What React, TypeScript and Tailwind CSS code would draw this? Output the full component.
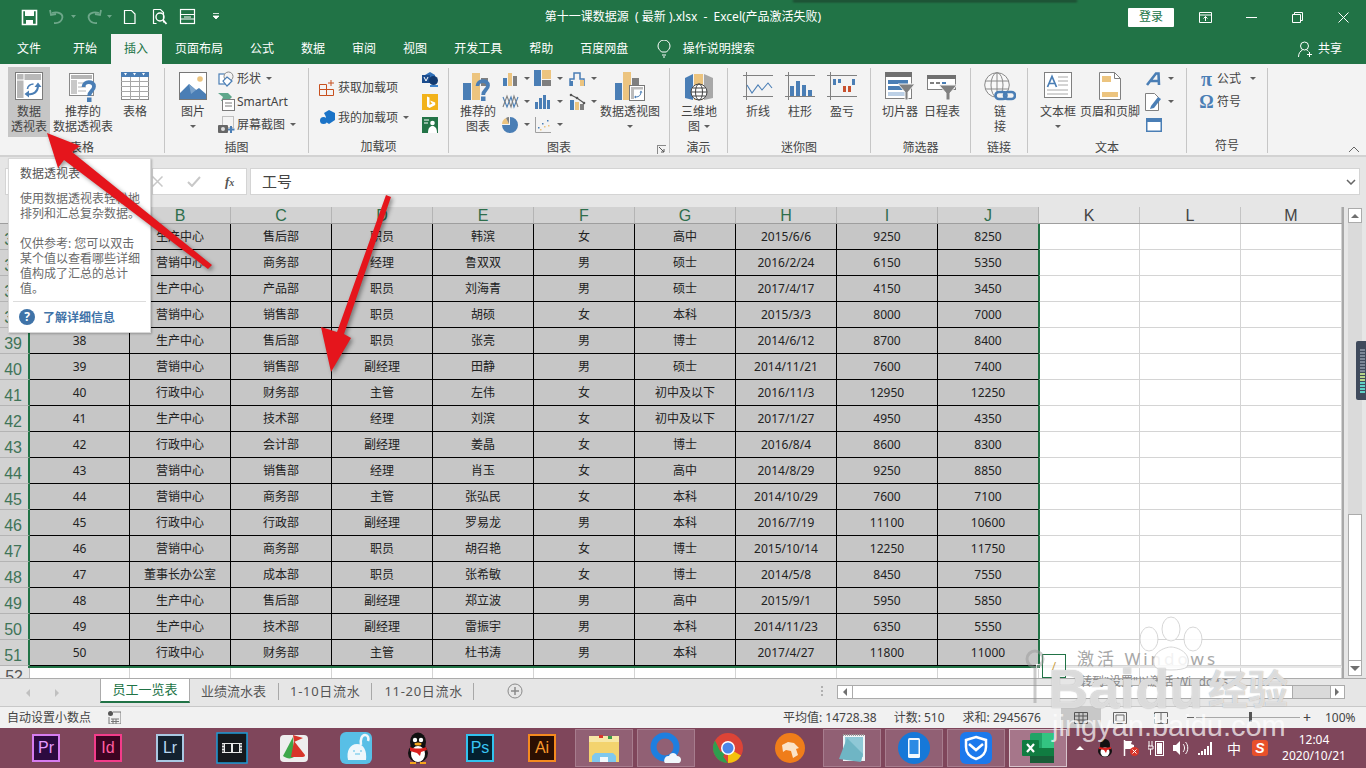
import type { ReactNode } from "react";

const BLUE = "#4a7eb5";
const TAN = "#ecc47f";
const GRAY = "#7f7f7f";

const RIBBON_TABS = ["文件", "开始", "插入", "页面布局", "公式", "数据", "审阅", "视图", "开发工具", "帮助", "百度网盘"];

const COLS = ["A", "B", "C", "D", "E", "F", "G", "H", "I", "J"];
const EXTRA_COLS = ["K", "L", "M"];

const ROWS: string[][] = [
  ["34", "生产中心", "售后部", "职员", "韩滨", "女", "高中", "2015/6/6", "9250", "8250"],
  ["35", "营销中心", "商务部", "经理", "鲁双双", "男", "硕士", "2016/2/24", "6150", "5350"],
  ["36", "生产中心", "产品部", "职员", "刘海青", "男", "硕士", "2017/4/17", "4150", "3450"],
  ["37", "营销中心", "销售部", "职员", "胡硕", "女", "本科", "2015/3/3", "8000", "7000"],
  ["38", "生产中心", "售后部", "职员", "张亮", "男", "博士", "2014/6/12", "8700", "8400"],
  ["39", "营销中心", "销售部", "副经理", "田静", "男", "硕士", "2014/11/21", "7600", "7400"],
  ["40", "行政中心", "财务部", "主管", "左伟", "女", "初中及以下", "2016/11/3", "12950", "12250"],
  ["41", "生产中心", "技术部", "经理", "刘滨", "女", "初中及以下", "2017/1/27", "4950", "4350"],
  ["42", "行政中心", "会计部", "副经理", "姜晶", "女", "博士", "2016/8/4", "8600", "8300"],
  ["43", "营销中心", "销售部", "经理", "肖玉", "女", "高中", "2014/8/29", "9250", "8850"],
  ["44", "营销中心", "商务部", "主管", "张弘民", "女", "本科", "2014/10/29", "7600", "7100"],
  ["45", "行政中心", "行政部", "副经理", "罗易龙", "男", "本科", "2016/7/19", "11100", "10600"],
  ["46", "营销中心", "商务部", "职员", "胡召艳", "女", "博士", "2015/10/14", "12250", "11750"],
  ["47", "董事长办公室", "成本部", "职员", "张希敏", "女", "博士", "2014/5/8", "8450", "7550"],
  ["48", "生产中心", "售后部", "副经理", "郑立波", "男", "高中", "2015/9/1", "5950", "5850"],
  ["49", "生产中心", "技术部", "副经理", "雷振宇", "男", "本科", "2014/11/23", "6350", "5550"],
  ["50", "行政中心", "财务部", "主管", "杜书涛", "男", "本科", "2017/4/27", "11800", "11000"],
];

function Svg({ w, h, children }: { w: number; h: number; children: ReactNode }) {
  return (
    <svg width={w} height={h} viewBox={`0 0 ${w} ${h}`} fill="none" className="shrink-0 block">
      {children}
    </svg>
  );
}

function Caret() {
  return <span className="inline-block h-0 w-0 shrink-0 border-x-[3px] border-t-[3px] border-x-transparent border-t-[#5f5f5f]" />;
}

/* ---------- ribbon icons ---------- */

const PivotIcon = () => (
  <Svg w={28} h={28}>
    <rect x="0.5" y="0.5" width="27" height="27" fill="#fff" stroke="#7b7b7b" />
    <rect x="2" y="2" width="7" height="24" fill="#b8b8b8" />
    <rect x="2" y="2" width="24" height="6" fill="#b8b8b8" />
    <path d="M9 2v24M2 8h7" stroke="#fff" />
    <path d="M13 22c5 1 10-2 10-8" stroke={BLUE} strokeWidth="2" />
    <path d="M19.500 15l3.500-4.500 3.500 4.500zM14 18.500L9.500 22l4.500 3.500z" fill={BLUE} />
    <path d="M12.500 17c0-3 3-5 6-5" stroke={BLUE} strokeWidth="1.600" />
  </Svg>
);

const QuestionMark = ({ x, y }: { x: number; y: number }) => (
  <g transform={`translate(${x} ${y})`}>
    <path d="M1.500 6C1.500-.5 12-.5 12 5.500c0 4.500-4.800 4.500-4.800 9.500" stroke={BLUE} strokeWidth="3.800" fill="none" />
    <rect x="5" y="16.500" width="4.500" height="4.500" fill={BLUE} />
  </g>
);

const RecPivotIcon = () => (
  <Svg w={30} h={30}>
    <rect x="1.5" y="1.5" width="24" height="22" fill="#fff" stroke="#8a8a8a" />
    <rect x="3" y="3" width="21" height="4" fill="#b5b5b5" />
    <rect x="3" y="8" width="6" height="14" fill="#c9c9c9" />
    <path d="M10 11h13M10 15h8M10 19h8" stroke="#b5b5b5" />
    <QuestionMark x={14} y={9} />
  </Svg>
);

const TableIcon = () => (
  <Svg w={28} h={28}>
    <rect x="0.5" y="0.5" width="27" height="27" fill="#fff" stroke="#8a8a8a" />
    <rect x="0" y="0" width="28" height="5" fill={BLUE} />
    <path d="M3 1h3l-1.500 2.500zM12 1h3l-1.500 2.500zM21 1h3l-1.500 2.500z" fill="#fff" />
    <path d="M0 9.500h28M0 14.500h28M0 19.500h28M0 24.500h28M9.500 5v23M18.500 5v23" stroke="#a8a8a8" />
  </Svg>
);

const PictureIcon = () => (
  <Svg w={28} h={28}>
    <rect x="0.5" y="0.5" width="27" height="27" fill="#fff" stroke="#777" />
    <circle cx="21" cy="7" r="2.800" fill={TAN} />
    <path d="M1 27V21L10 12l7 6 3-2 7 6v5z" fill={BLUE} />
    <path d="M10 12l7 6-5 4z" fill="#7ba3cc" />
  </Svg>
);

const ShapesIcon = () => (
  <Svg w={16} h={16}>
    <rect x="1" y="3" width="10" height="10" stroke={BLUE} strokeWidth="1.200" fill="#fff" />
    <circle cx="10.500" cy="5.500" r="4.500" stroke="#8a8a8a" fill="#f3f3f3" />
    <path d="M9 6l5 4-5 5-4-5z" stroke={BLUE} strokeWidth="1.200" fill="#fff" />
  </Svg>
);

const SmartArtIcon = () => (
  <Svg w={17} h={18}>
    <path d="M0 0h10l4 4-4 4H3l2-4z" fill="#5ea68a" />
    <rect x="4.500" y="6.500" width="12" height="11" fill="#fff" stroke="#7b7b7b" />
    <path d="M7 10h7M7 13h7" stroke="#7b7b7b" />
  </Svg>
);

const ScreenshotIcon = () => (
  <Svg w={17} h={18}>
    <rect x="4.500" y="0.500" width="11" height="11" stroke="#8a8a8a" strokeDasharray="1 1" />
    <rect x="0" y="9" width="10" height="8" rx="1" fill="#666" />
    <circle cx="5" cy="13" r="2" fill="#ddd" />
    <path d="M13 10v7M10 13.500h6.500" stroke={BLUE} strokeWidth="2" />
  </Svg>
);

const GetAddinIcon = () => (
  <Svg w={16} h={16}>
    <path d="M0.500 4.500h7v5h-7zM7.500 9.500h7v6h-7zM0.500 9.500h7v6h-7z" stroke="#c8501e" />
    <path d="M12 0v6M9 3h6" stroke="#c8501e" />
  </Svg>
);

const MyAddinIcon = () => (
  <Svg w={15} h={15}>
    <circle cx="3.500" cy="10.500" r="3.500" fill="#1a73c7" />
    <path d="M4 3l5-3 6 3v7l-6 4-3-2V7z" fill="#1a73c7" />
  </Svg>
);

const VisioIcon = () => (
  <Svg w={16} h={16}>
    <path d="M3 4l5-3 5 3v3H3z" fill="#2f6fb7" />
    <rect x="0" y="4" width="8" height="8" fill="#1c4d8e" />
    <path d="M2 6l2 4 2-4" stroke="#fff" />
    <circle cx="11.500" cy="9.500" r="4.500" fill="#123a70" />
    <path d="M8 14h8v2H8z" fill="#3f84cc" />
  </Svg>
);

const BingIcon = () => (
  <Svg w={16} h={16}>
    <rect width="16" height="16" fill="#f2b21a" />
    <path d="M5 2.500l2.500 1v7.500l3-1.700-1.500-.7-.8-2 5 1.800v2.600L7.500 14 5 12.500z" fill="#fff" />
  </Svg>
);

const PeopleIcon = () => (
  <Svg w={16} h={16}>
    <rect width="16" height="16" fill="#237346" />
    <path d="M2 3h5M2 6h4" stroke="#fff" />
    <circle cx="10.500" cy="6" r="2.300" fill="#fff" />
    <path d="M6 16c0-5 2-7 4.500-7S15 11 15 16z" fill="#fff" />
  </Svg>
);

const RecChartIcon = () => (
  <Svg w={30} h={30}>
    <rect x="0" y="11" width="8" height="17" fill={BLUE} />
    <rect x="9" y="1" width="8" height="27" fill={TAN} />
    <rect x="18" y="6" width="7" height="8" fill={GRAY} />
    <QuestionMark x={13} y={8} />
  </Svg>
);

const ColChart = () => (
  <Svg w={16} h={16}>
    <rect x="1" y="7" width="4" height="8" fill={BLUE} />
    <rect x="6" y="2" width="4" height="13" fill={TAN} />
    <rect x="11" y="5" width="4" height="10" fill={GRAY} />
  </Svg>
);
const TreeChart = () => (
  <Svg w={18} h={18}>
    <rect x="0" y="0" width="7" height="16" fill={BLUE} />
    <rect x="8" y="0" width="9" height="9" fill={TAN} />
    <rect x="8" y="10" width="9" height="6" fill={GRAY} />
  </Svg>
);
const StepChart = () => (
  <Svg w={17} h={17}>
    <path d="M1 16V9h4V3h6v6h4v7" stroke={BLUE} strokeWidth="1.500" />
    <rect x="11" y="10" width="4" height="6" fill={TAN} />
    <rect x="1" y="11" width="3" height="5" fill={BLUE} />
  </Svg>
);
const LineChart2 = () => (
  <Svg w={17} h={17}>
    <path d="M1 4l4 10 4-10 3 10 4-10" stroke={BLUE} strokeWidth="1.100" />
    <path d="M1 14l4-11 4 11 3-11 4 11" stroke={GRAY} strokeWidth="1.100" />
  </Svg>
);
const BarsChart = () => (
  <Svg w={16} h={16}>
    <rect x="0" y="8" width="3" height="7" fill={BLUE} />
    <rect x="4" y="4" width="3" height="11" fill={BLUE} />
    <rect x="8" y="1" width="3" height="14" fill={BLUE} />
    <rect x="12" y="6" width="3" height="9" fill={BLUE} />
  </Svg>
);
const ComboChart = () => (
  <Svg w={17} h={17}>
    <rect x="1" y="7" width="4" height="10" fill={BLUE} />
    <rect x="6" y="9" width="4" height="8" fill={TAN} />
    <rect x="11" y="11" width="4" height="6" fill={GRAY} />
    <path d="M2 2l6 3 7 5" stroke="#555" strokeWidth="1.200" />
    <circle cx="2" cy="2" r="1.300" fill="#555" />
    <circle cx="8" cy="5" r="1.300" fill="#555" />
    <circle cx="15" cy="10" r="1.300" fill="#555" />
  </Svg>
);
const PieChart = () => (
  <Svg w={16} h={16}>
    <path d="M8 8V0a8 8 0 1 1-8 8z" fill={BLUE} />
    <path d="M7 7H0a7 7 0 0 1 4-6z" fill={TAN} />
    <path d="M7 7L4 1a7 7 0 0 1 3-1z" fill={GRAY} />
  </Svg>
);
const ScatterChart = () => (
  <Svg w={16} h={16}>
    <path d="M0.500 0v15.500H16" stroke="#a0a0a0" />
    <g fill={BLUE}>
      <rect x="3" y="10" width="1.500" height="1.500" />
      <rect x="7" y="6" width="1.500" height="1.500" />
      <rect x="12" y="3" width="1.500" height="1.500" />
    </g>
    <g fill={TAN}>
      <rect x="5" y="12" width="1.500" height="1.500" />
      <rect x="9" y="9" width="1.500" height="1.500" />
      <rect x="13" y="8" width="1.500" height="1.500" />
    </g>
  </Svg>
);
const PivotChartIcon = () => (
  <Svg w={30} h={30}>
    <rect x="0" y="11" width="7" height="17" fill={BLUE} />
    <rect x="8" y="0" width="8" height="28" fill={TAN} />
    <rect x="17" y="6" width="7" height="8" fill={GRAY} />
    <rect x="14.500" y="13.500" width="15" height="15" fill="#fff" stroke="#777" />
    <rect x="16" y="15" width="12" height="2.500" fill="#bbb" />
    <rect x="16" y="15" width="3" height="12" fill="#bbb" />
    <path d="M21 25c3 0 5-2 5-5" stroke={BLUE} />
    <path d="M24.500 20.500l1.500-2 1.500 2zM21 23.500l-2 1.500 2 1.500z" fill={BLUE} />
  </Svg>
);
const MapIcon = () => (
  <Svg w={30} h={30}>
    <path d="M1 6l8-4v26l-8-2z" fill={BLUE} />
    <path d="M10 2h9v26h-9z" fill={TAN} />
    <path d="M20 2l9 4v20l-9 2z" fill="#a8a8a8" />
    <circle cx="15" cy="20" r="8" fill="#fff" stroke="#444" />
    <ellipse cx="15" cy="20" rx="3.500" ry="8" stroke="#444" />
    <path d="M7 20h16M8.500 16h13M8.500 24h13" stroke="#444" />
  </Svg>
);
const SparkFrame = ({ children }: { children: ReactNode }) => (
  <Svg w={30} h={28}>
    <path d="M0 3.500h30M0 24.500h30M3.500 0v28" stroke="#808080" />
    {children}
  </Svg>
);
const SparkLine = () => (
  <SparkFrame>
    <path d="M4 13l5 8 6-8 4 5 6-7 4 5" stroke={BLUE} strokeWidth="1.100" />
  </SparkFrame>
);
const SparkCol = () => (
  <SparkFrame>
    <rect x="5" y="14" width="4" height="10" fill={BLUE} />
    <rect x="11" y="9" width="4" height="15" fill={BLUE} />
    <rect x="17" y="13" width="4" height="11" fill={BLUE} />
    <rect x="23" y="18" width="4" height="6" fill={BLUE} />
  </SparkFrame>
);
const SparkWin = () => (
  <SparkFrame>
    <rect x="6" y="7" width="3" height="6" fill={BLUE} />
    <rect x="11" y="7" width="3" height="4" fill={BLUE} />
    <rect x="16" y="14" width="3" height="6" fill="#c8502d" />
    <rect x="21" y="14" width="3" height="6" fill="#c8502d" />
    <rect x="25" y="7" width="3" height="6" fill={BLUE} />
  </SparkFrame>
);
const SlicerIcon = () => (
  <Svg w={30} h={28}>
    <rect x="0.500" y="0.500" width="26" height="26" fill="#fff" stroke="#808080" />
    <rect x="0" y="0" width="27" height="5" fill="#707070" />
    <rect x="3" y="8" width="20" height="4" fill={BLUE} />
    <rect x="3" y="14" width="20" height="4" fill={BLUE} />
    <rect x="3" y="20" width="20" height="4" fill="#bcd0e6" />
    <path d="M13 12h17l-7 8v8h-3v-8z" fill="#808080" stroke="#f3f3f3" />
  </Svg>
);
const TimelineIcon = () => (
  <Svg w={30} h={28}>
    <rect x="0.500" y="3.500" width="28" height="14" fill="#fff" stroke="#808080" />
    <rect x="0" y="3" width="29" height="4" fill="#707070" />
    <path d="M3 11h4M9 11h4" stroke={GRAY} strokeWidth="2" />
    <path d="M15 11h4" stroke={BLUE} strokeWidth="2" />
    <path d="M12 13h18l-7 8v7h-4v-7z" fill="#808080" stroke="#f3f3f3" />
  </Svg>
);
const LinkIcon = () => (
  <Svg w={32} h={32}>
    <circle cx="13" cy="13" r="12.300" stroke="#8a8a8a" fill="#f8f8f8" />
    <ellipse cx="13" cy="13" rx="6" ry="12.300" stroke="#8a8a8a" />
    <path d="M1 9h24M1 17h24M13 1v24" stroke="#8a8a8a" />
    <g stroke={BLUE} strokeWidth="2.600">
      <rect x="11.500" y="20" width="11" height="7" rx="3.500" fill="#f3f3f3" />
      <rect x="20" y="20" width="11" height="7" rx="3.500" />
    </g>
  </Svg>
);
const TextBoxIcon = () => (
  <Svg w={28} h={26}>
    <rect x="0.500" y="0.500" width="27" height="25" fill="#fff" stroke="#808080" />
    <path d="M3.500 15L8 4.500 12.500 15M5 11.500h6" stroke={BLUE} strokeWidth="1.700" />
    <path d="M14 5h10M14 9h10M14 13h10M3 18h21M3 22h21" stroke="#a8a8a8" />
  </Svg>
);
const HeaderFooterIcon = () => (
  <Svg w={22} h={28}>
    <path d="M0.500 0.500h15l6 6v21h-21z" fill="#fff" stroke="#808080" />
    <path d="M15.500 0.500v6h6" stroke="#808080" />
    <rect x="3" y="4" width="9" height="6" fill={TAN} />
    <rect x="3" y="20" width="16" height="5" fill={TAN} />
  </Svg>
);
const WordArtIcon = () => (
  <Svg w={16} h={14}>
    <path d="M1 13L10 1.500h2.500L13 13M5 9h7" stroke={BLUE} strokeWidth="2.600" />
  </Svg>
);
const SignIcon = () => (
  <Svg w={18} h={18}>
    <path d="M0.500 0.500h9l4 4v13h-13z" fill="#fff" stroke="#808080" />
    <path d="M6 13l7-9 3 2-7 9-4 1z" fill={BLUE} />
  </Svg>
);
const ObjectIcon = () => (
  <Svg w={16} h={14}>
    <rect x="0.750" y="0.750" width="14.500" height="12.500" fill="#fff" stroke={BLUE} strokeWidth="1.500" />
    <rect x="0" y="0" width="16" height="4" fill={BLUE} />
  </Svg>
);

/* ---------- ribbon blocks ---------- */

function Group({ w, label, children, launcher }: { w: number; label: string; children: ReactNode; launcher?: boolean }) {
  return (
    <div style={{ width: w }} className="relative flex h-[85px] shrink-0 flex-col border-r border-[#c6c6c6]">
      <div className="-mt-px flex h-[70px] items-start">{children}</div>
      <div className="mt-[4px] text-center text-[12px] leading-[14px] text-[#444]">{label}</div>
      {launcher && (
        <span className="absolute right-[3px] bottom-[-1px] h-[9px] w-[9px] border-l border-t border-[#8a8a8a]">
          <svg width="8" height="8" viewBox="0 0 8 8" className="block">
            <path d="M1 1l5 5M6 3v3H3" stroke="#555" fill="none" />
          </svg>
        </span>
      )}
    </div>
  );
}

function Large({ w, icon, lines, caret, hot, iconH = 28, ml = 0 }: { w: number; icon: ReactNode; lines: ReactNode[]; caret?: boolean; hot?: boolean; iconH?: number; ml?: number }) {
  return (
    <div style={{ width: w, marginLeft: ml }} className={`flex h-[70px] shrink-0 flex-col items-center pt-[5px] text-[12px] leading-[15px] text-[#444] ${hot ? "bg-[#c6c6c6]" : ""}`}>
      <div style={{ height: iconH }} className="flex items-start justify-center">{icon}</div>
      <div style={{ marginTop: 32 - iconH }} className="whitespace-nowrap text-center">
        {lines.map((l, i) => (
          <div key={i} className="flex h-[15px] items-center justify-center gap-1">{l}</div>
        ))}
        {caret && <div className="flex h-[15px] items-center justify-center"><Caret /></div>}
      </div>
    </div>
  );
}

function Small({ icon, label, caret, iw = 18, gap = 1 }: { icon: ReactNode; label?: string; caret?: boolean; iw?: number; gap?: number }) {
  return (
    <div className="flex h-[23px] items-center whitespace-nowrap text-[12px] text-[#444]">
      <span style={{ width: iw }} className="flex items-center justify-center">{icon}</span>
      {label && <span style={{ marginLeft: gap }}>{label}</span>}
      {caret && <span className="ml-[5px] flex"><Caret /></span>}
    </div>
  );
}

function Ribbon() {
  return (
    <div className="flex h-[93px] shrink-0 border-b-2 border-[#d2d2d2] bg-[#f3f3f3] pt-[4px]">
      <Group w={165} label="表格">
        <Large w={42} ml={8} hot icon={<PivotIcon />} lines={["数据", "透视表"]} />
        <Large w={62} ml={2} icon={<RecPivotIcon />} lines={["推荐的", "数据透视表"]} />
        <Large w={38} ml={2} icon={<TableIcon />} lines={["表格"]} />
      </Group>
      <Group w={144} label="插图">
        <Large w={30} ml={13} icon={<PictureIcon />} lines={["图片"]} caret />
        <div className="ml-[9px]">
          <Small icon={<ShapesIcon />} label="形状" caret iw={18} gap={2} />
          <Small icon={<SmartArtIcon />} label="SmartArt" iw={18} gap={2} />
          <Small icon={<ScreenshotIcon />} label="屏幕截图" caret iw={18} gap={2} />
        </div>
      </Group>
      <Group w={140} label="加载项">
        <div className="ml-[10px] w-[103px] pt-[9px]">
          <Small icon={<GetAddinIcon />} label="获取加载项" iw={16} gap={3} />
          <div className="h-[7px]" />
          <Small icon={<MyAddinIcon />} label="我的加载项" caret iw={16} gap={3} />
        </div>
        <div className="ml-[-1px] flex flex-col pl-0">
          <Small icon={<VisioIcon />} iw={18} />
          <Small icon={<BingIcon />} iw={18} />
          <Small icon={<PeopleIcon />} iw={18} />
        </div>
      </Group>
      <Group w={221} label="图表" launcher>
        <Large w={36} ml={11} icon={<RecChartIcon />} iconH={30} lines={["推荐的", "图表"]} />
        <div className="ml-[5px] w-[33px]">
          <Small icon={<ColChart />} caret iw={18} />
          <Small icon={<LineChart2 />} caret iw={18} />
          <Small icon={<PieChart />} caret iw={18} />
        </div>
        <div className="w-[34px]">
          <Small icon={<TreeChart />} caret iw={18} />
          <Small icon={<BarsChart />} caret iw={18} />
          <Small icon={<ScatterChart />} caret iw={18} />
        </div>
        <div className="w-[34px]">
          <Small icon={<StepChart />} caret iw={18} />
          <Small icon={<ComboChart />} caret iw={18} />
        </div>
        <Large w={62} ml={-3} icon={<PivotChartIcon />} iconH={30} lines={["数据透视图"]} caret />
      </Group>
      <Group w={58} label="演示">
        <Large w={36} ml={11} icon={<MapIcon />} iconH={30} lines={["三维地", <span key="m" className="flex items-center gap-1">图<Caret /></span>]} />
      </Group>
      <Group w={143} label="迷你图">
        <Large w={42} ml={9} icon={<SparkLine />} lines={["折线"]} />
        <Large w={42} icon={<SparkCol />} lines={["柱形"]} />
        <Large w={42} icon={<SparkWin />} lines={["盈亏"]} />
      </Group>
      <Group w={100} label="筛选器">
        <Large w={42} ml={8} icon={<SlicerIcon />} lines={["切片器"]} />
        <Large w={42} icon={<TimelineIcon />} lines={["日程表"]} />
      </Group>
      <Group w={57} label="链接">
        <Large w={32} ml={13} icon={<LinkIcon />} iconH={32} lines={["链", "接"]} />
      </Group>
      <Group w={159} label="文本">
        <Large w={40} ml={10} icon={<TextBoxIcon />} lines={["文本框"]} caret />
        <Large w={60} ml={2} icon={<HeaderFooterIcon />} lines={["页眉和页脚"]} />
        <div className="ml-[5px] w-[32px]">
          <Small icon={<WordArtIcon />} caret iw={18} />
          <Small icon={<SignIcon />} caret iw={18} />
          <Small icon={<ObjectIcon />} iw={18} />
        </div>
      </Group>
      <Group w={81} label="符号">
        <div className="ml-[10px]">
          <div className="flex h-[23px] items-center whitespace-nowrap text-[12px] text-[#444]">
            <span className="w-[19px] text-center font-['Liberation_Serif',serif] text-[20px] font-bold leading-[20px] text-[#4a7eb5]">π</span>
            <span className="ml-[1px]">公式</span>
            <span className="ml-[9px] flex"><Caret /></span>
          </div>
          <div className="flex h-[23px] items-center whitespace-nowrap text-[12px] text-[#444]">
            <span className="w-[19px] text-center font-['Liberation_Serif',serif] text-[18px] font-bold leading-[20px] text-[#4a7eb5]">Ω</span>
            <span className="ml-[1px]">符号</span>
          </div>
        </div>
      </Group>
      <div className="flex flex-1 items-end justify-end pb-[2px] pr-[6px]">
        <svg width="12" height="7" viewBox="0 0 12 7"><path d="M1 6l5-5 5 5" stroke="#666" fill="none" /></svg>
      </div>
    </div>
  );
}

/* ---------- title + tabs ---------- */

function TitleBar() {
  return (
    <div className="relative flex h-[34px] shrink-0 items-center bg-[#217346] text-white">
      <div className="flex w-[238px] shrink-0 items-center">
        <svg width="238" height="34" viewBox="0 0 238 34" className="block">
          <path d="M22.500 10.500h14v14h-14z" stroke="#fff" strokeWidth="1.600" fill="none" />
          <path d="M25 11h9v5h-9zM26 20h7v4h-7z" fill="#fff" />
          <g stroke="#6ea78a" strokeWidth="1.800" fill="none">
            <path d="M52 13c6-2 12 1 10 6s-6 4-8 4" />
            <path d="M50 10l1 5 5-1" />
            <path d="M99 13c-6-2-12 1-10 6s6 4 8 4" />
            <path d="M101 10l-1 5-5-1" />
          </g>
          <path d="M71 15l2.500 3 2.500-3zM107 15l2.500 3 2.500-3z" fill="#6ea78a" />
          <path d="M124.500 10.500h7l3.500 3.500v9.500h-10.500z" stroke="#fff" strokeWidth="1.200" fill="none" />
          <path d="M153.500 9.500h7l3 3v10" stroke="#fff" strokeWidth="1.200" fill="none" />
          <path d="M153.500 9.500v14h3" stroke="#fff" strokeWidth="1.200" fill="none" />
          <circle cx="160" cy="17" r="4" stroke="#fff" strokeWidth="1.400" fill="none" />
          <path d="M163 20l3.500 4" stroke="#fff" strokeWidth="1.800" />
          <rect x="180.500" y="9.500" width="14" height="14" stroke="#fff" strokeWidth="1.200" fill="none" />
          <path d="M180 14.500h15M180 19h15M184 17h7" stroke="#fff" />
          <path d="M213 13.500h6M213 16l3 3 3-3z" stroke="#fff" fill="#fff" strokeWidth="0.800" />
        </svg>
      </div>
      <div className="flex-1 whitespace-pre text-center text-[12px]">第十一课数据源  ( 最新 ).xlsx  -  Excel(产品激活失败)</div>
      <div className="flex h-[19px] w-[46px] shrink-0 items-center justify-center rounded-[1px] bg-white text-[12px] text-[#217346]">登录</div>
      <div className="ml-[8px] flex">
        <span className="flex h-[34px] w-[46px] items-center justify-center">
          <svg width="13" height="11" viewBox="0 0 13 11"><path d="M0.500 0.500h12v10h-12zM0 3h13M6.500 9V4.500M4.500 6.500l2-2 2 2" stroke="#fff" fill="none" /></svg>
        </span>
        <span className="flex h-[34px] w-[46px] items-center justify-center">
          <svg width="11" height="11" viewBox="0 0 11 11"><path d="M0 5.500h11" stroke="#fff" /></svg>
        </span>
        <span className="flex h-[34px] w-[46px] items-center justify-center">
          <svg width="11" height="11" viewBox="0 0 11 11"><path d="M0.500 2.500h8v8h-8zM2.500 2.500v-2h8v8h-2" stroke="#fff" fill="none" /></svg>
        </span>
        <span className="flex h-[34px] w-[46px] items-center justify-center">
          <svg width="11" height="11" viewBox="0 0 11 11"><path d="M0.500 0.500l10 10M10.500 0.500l-10 10" stroke="#fff" /></svg>
        </span>
      </div>
      <div className="absolute left-[793px] top-0 h-[2px] w-[284px] bg-[#1b3d2b] blur-[1px]" />
    </div>
  );
}

function TabStrip() {
  return (
    <div className="flex h-[30px] shrink-0 items-stretch bg-[#217346] pl-[3.5px] text-[12px] text-white">
      {RIBBON_TABS.map((t, i) => (
        <div key={t} className={`flex items-center px-[13.5px] ${i === 0 ? "mr-[5px]" : ""} ${t === "插入" ? "bg-[#f3f3f3] text-[#217346]" : ""}`}>{t}</div>
      ))}
      <div className="ml-[15px] flex items-center">
        <svg width="14" height="18" viewBox="0 0 14 18" fill="none" stroke="#fff">
          <path d="M4.500 12C3 10 1 9 1 6a6 6 0 0 1 12 0c0 3-2 4-3.500 6z" />
          <path d="M5 15h4M6 17h2" />
        </svg>
      </div>
      <div className="ml-[12px] flex items-center">操作说明搜索</div>
      <div className="ml-auto flex items-center pr-[24px]">
        <svg width="15" height="17" viewBox="0 0 15 17" fill="none" stroke="#fff">
          <circle cx="6.500" cy="5" r="4" />
          <path d="M0.500 16c0-4 2-6 4-7M8.500 9c1 .4 1.500.8 2 1.500M11.500 11v5M9 13.500h5" />
        </svg>
        <span className="ml-[5px]">共享</span>
      </div>
    </div>
  );
}

function FormulaBar() {
  return (
    <div className="flex h-[50px] shrink-0 items-start gap-[4px] bg-[#e6e6e6] pl-[5px] pr-[6px] pt-[11px]">
      <div className="h-[27px] w-[143px] shrink-0 border border-[#d4d4d4] bg-white" />
      <div className="relative flex h-[27px] w-[95px] shrink-0 items-center border border-[#d4d4d4] bg-white pl-[31px]">
        <svg width="11" height="11" viewBox="0 0 11 11" className="absolute left-[-1px]"><path d="M0.500 0.500l10 10M10.500 0.500l-10 10" stroke="#c8c8c8" strokeWidth="1.500" /></svg>
        <svg width="14" height="11" viewBox="0 0 14 11" className="ml-[3px]"><path d="M1 6l4 4 8-9" stroke="#c8c8c8" strokeWidth="2" fill="none" /></svg>
        <span className="ml-[24px] font-['Liberation_Serif',serif] text-[13px] font-bold italic text-[#555]">f<span className="text-[10px]">x</span></span>
      </div>
      <div className="-ml-px flex h-[27px] flex-1 items-center border border-[#d4d4d4] bg-white pl-[11px] pr-[3px] text-[15px] text-[#444]">
        <span>工号</span>
        <svg width="10" height="6" viewBox="0 0 10 6" className="ml-auto"><path d="M1 1l4 4 4-4" stroke="#666" strokeWidth="1.500" fill="none" /></svg>
      </div>
    </div>
  );
}

/* ---------- sheet ---------- */

function HeaderRow() {
  return (
    <div className="flex h-[17px] shrink-0 overflow-hidden border-b border-[#9e9e9e] bg-[#e6e6e6] text-[16px] leading-[17px]">
      <div className="w-[30px] shrink-0 border-r border-[#bcbcbc] bg-[#e6e6e6]" />
      {COLS.map((c, i) => (
        <div key={c} className={`${i === 0 ? "w-[100px]" : "w-[101px]"} shrink-0 border-r border-[#b4b4b4] bg-[#d2d2d2] text-center font-['Liberation_Sans',sans-serif] text-[#2e6e4c]`}>{c}</div>
      ))}
      {EXTRA_COLS.map((c) => (
        <div key={c} className="w-[101px] shrink-0 border-r border-[#c4c4c4] text-center font-['Liberation_Sans',sans-serif] text-[#444]">{c}</div>
      ))}
    </div>
  );
}

function DataRow({ row, n }: { row: string[]; n: number }) {
  return (
    <div className="flex h-[26px] shrink-0 text-[12px] leading-[25px] text-[#222]">
      <div className="w-[30px] shrink-0 overflow-hidden border-r-2 border-b border-r-[#217346] border-b-[#b4b4b4] bg-[#d2d2d2] pt-[3px] pr-[6px] text-right font-['Liberation_Sans',sans-serif] text-[16px] text-[#3f7458]">{n}</div>
      {row.map((cell, i) => (
        <div
          key={i}
          className={`${i === 0 ? "w-[100px]" : "w-[101px]"} shrink-0 border-b border-b-black bg-[#c6c6c6] text-center ${i === 9 ? "border-r border-r-[#217346]" : "border-r border-r-black"}`}
        >
          {cell}
        </div>
      ))}
      {EXTRA_COLS.map((c, i) => (
        <div key={c} className={`w-[101px] shrink-0 border-r border-b border-[#d4d4d4] bg-white ${i === 0 ? "border-l border-l-[#217346]" : ""}`} />
      ))}
    </div>
  );
}

function Sheet() {
  return (
    <div className="flex h-[471px] shrink-0">
      <div className="relative w-[1344px] shrink-0 overflow-hidden border-r-2 border-[#a8a8a8]">
        <HeaderRow />
        {ROWS.map((r, i) => (
          <DataRow key={r[0]} row={r} n={i + 35} />
        ))}
        <div className="ml-[28px] h-[2px] w-[1012px] bg-[#217346]" />
        <div className="flex h-[10px] overflow-hidden">
          <div className="w-[30px] shrink-0 border-r border-[#bcbcbc] bg-[#e6e6e6] pr-[6px] text-right font-['Liberation_Sans',sans-serif] text-[16px] leading-[18px] text-[#555]">52</div>
          {[...COLS, ...EXTRA_COLS].map((c, i) => (
            <div key={c} className={`${i === 0 ? "w-[100px]" : "w-[101px]"} shrink-0 border-r border-[#d4d4d4] bg-white`} />
          ))}
        </div>
        <span className="absolute bottom-[9px] left-[1036px] h-[5px] w-[5px] border border-white bg-[#217346]" />
      </div>
      <div className="flex flex-1 flex-col bg-[#e6e6e6] px-[4px] pt-px">
        <div className="flex h-[15px] shrink-0 items-center justify-center border border-[#ababab] bg-white">
          <span className="h-0 w-0 border-x-[4px] border-b-[4px] border-x-transparent border-b-[#707070]" />
        </div>
        <div className="flex-1 bg-[#dadada]" />
        <div className="h-[147px] shrink-0 border border-[#ababab] bg-white" />
        <div className="flex h-[15px] shrink-0 items-center justify-center border border-t-0 border-[#ababab] bg-white">
          <span className="h-0 w-0 border-x-[5px] border-t-[5px] border-x-transparent border-t-[#707070]" />
        </div>
        <div className="h-[2px] shrink-0" />
      </div>
    </div>
  );
}

function SheetTabs() {
  return (
    <div className="flex h-[28px] shrink-0 border-t border-[#ababab] bg-[#e6e6e6] text-[13px] text-[#555]">
      <div className="flex w-[100px] shrink-0 items-center pl-[26px]">
        <span className="h-0 w-0 border-y-[4px] border-r-[4px] border-y-transparent border-r-[#c0c0c0]" />
        <span className="ml-[25px] h-0 w-0 border-y-[4px] border-l-[4px] border-y-transparent border-l-[#c0c0c0]" />
      </div>
      <div className="flex h-[24px] w-[90px] shrink-0 items-center justify-center border-x border-b-2 border-x-[#ababab] border-b-[#217346] bg-white text-[#217346]">员工一览表</div>
      <div className="mt-[4px] flex h-[17px] items-center">
        <span className="ml-[11px]">业绩流水表</span>
        <span className="ml-[12px] h-[17px] w-px bg-[#a8a8a8]" />
        <span className="ml-[11px] tracking-[0.7px]">1-10日流水</span>
        <span className="ml-[11px] h-[17px] w-px bg-[#a8a8a8]" />
        <span className="ml-[12px] tracking-[0.7px]">11-20日流水</span>
        <span className="ml-[10px] h-[17px] w-px bg-[#a8a8a8]" />
      </div>
      <div className="ml-[33px] flex h-[24px] items-center">
        <svg width="16" height="16" viewBox="0 0 16 16" fill="none" stroke="#8a8a8a"><circle cx="8" cy="8" r="7" /><path d="M8 4v8M4 8h8" strokeWidth="1.500" /></svg>
      </div>
      <div className="ml-[298px] flex h-[24px] flex-col items-center justify-center gap-[2px]">
        <span className="h-[2px] w-[2px] bg-[#b0b0b0]" />
        <span className="h-[2px] w-[2px] bg-[#b0b0b0]" />
        <span className="h-[2px] w-[2px] bg-[#b0b0b0]" />
      </div>
      <div className="ml-[14px] mt-[6px] flex h-[14px] w-[508px] shrink-0 border border-[#ababab] bg-[#dadada]">
        <span className="flex w-[15px] shrink-0 items-center justify-center border-r border-[#ababab] bg-white">
          <span className="h-0 w-0 border-y-[4px] border-r-[4px] border-y-transparent border-r-[#707070]" />
        </span>
        <span className="w-[440px] shrink-0 border-r border-[#ababab] bg-white" />
        <span className="ml-auto flex w-[14px] shrink-0 items-center justify-center border-l border-[#ababab] bg-white">
          <span className="h-0 w-0 border-y-[4px] border-l-[4px] border-y-transparent border-l-[#707070]" />
        </span>
      </div>
    </div>
  );
}

function StatusBar() {
  return (
    <div className="flex h-[22px] shrink-0 items-center border-t border-[#c8c8c8] bg-[#f1f1f1] text-[12px] text-[#444]">
      <span className="ml-[7px]">自动设置小数点</span>
      <svg width="13" height="13" viewBox="0 0 13 13" className="ml-[17px]">
        <circle cx="2.500" cy="2.500" r="2.500" fill="#555" />
        <path d="M5 1h8v12H1V6" fill="none" stroke="#777" />
        <path d="M3 8h8M3 10.500h8M5 8v5M8 8v5" stroke="#777" />
      </svg>
      <span className="ml-[662px]">平均值: 14728.38</span>
      <span className="ml-[17px]">计数: 510</span>
      <span className="ml-[18px]">求和: 2945676</span>
      <div className="ml-[20px] flex h-[21px] w-[40px] items-center justify-center bg-[#c8c8c8]">
        <svg width="14" height="12" viewBox="0 0 14 12" fill="none" stroke="#555"><path d="M0.500 0.500h13v11h-13zM0 4h14M0 8h14M5 0v12M9 0v12" /></svg>
      </div>
      <svg width="14" height="12" viewBox="0 0 14 12" fill="none" stroke="#666" className="ml-[12px]"><path d="M0.500 0.500h13v11h-13zM3 3h8v6H3z" /></svg>
      <svg width="14" height="12" viewBox="0 0 14 12" fill="none" stroke="#666" className="ml-[27px]"><path d="M0.500 5V0.500h13V5M0.500 7v4.500h13V7M7 0v12" /></svg>
      <span className="ml-[19px] h-px w-[7px] bg-[#666]" />
      <div className="relative ml-[2px] h-px w-[104px] bg-[#a8a8a8]">
        <span className="absolute left-[53px] top-[-5px] h-[10px] w-[3px] bg-[#555]" />
      </div>
      <span className="ml-[3px] text-[14px] leading-none">+</span>
      <span className="ml-[14px]">100%</span>
    </div>
  );
}

/* ---------- taskbar ---------- */

function AppSquare({ text, border, bg, color }: { text: string; border: string; bg: string; color: string }) {
  return (
    <div style={{ borderColor: border, background: bg, color }} className="flex h-[28px] w-[28px] items-center justify-center border-2 font-['Liberation_Sans',sans-serif] text-[16px] leading-none">
      {text}
    </div>
  );
}

const TASK_ICONS: { node: ReactNode; box?: boolean; bright?: boolean }[] = [
  { node: <AppSquare text="Pr" border="#d67cf0" bg="#2c0a3f" color="#e59bff" /> },
  { node: <AppSquare text="Id" border="#f43c8a" bg="#3d0422" color="#ff5fa3" /> },
  { node: <AppSquare text="Lr" border="#a9c8e2" bg="#13212f" color="#b9d8f2" /> },
  {
    node: (
      <Svg w={32} h={32}>
        <rect x="1" y="1" width="30" height="30" fill="#16191d" stroke="#1c9bd6" strokeWidth="1.500" />
        <path d="M6 11h20v10H6z" fill="#e8e8e8" />
        <path d="M9 12h6v8H9zM17 12h6v8h-6z" fill="#16191d" />
        <path d="M6 13h2M6 16h2M6 19h2M24 13h2M24 16h2M24 19h2" stroke="#16191d" />
      </Svg>
    ),
  },
  {
    node: (
      <Svg w={30} h={30}>
        <rect x="1" y="2" width="28" height="27" rx="4" fill="#eee" />
        <path d="M14 4l-10 19c4 3 8 3 11 1z" fill="#3ea84a" />
        <path d="M15 8l-3 16h10c2 0 4 0 4-2z" fill="#d8352a" />
        <path d="M14 2l10 3-9 4z" fill="#d8352a" />
      </Svg>
    ),
  },
  {
    node: (
      <Svg w={32} h={32}>
        <rect width="32" height="32" rx="6" fill="#58bfe6" />
        <path d="M8 28c-2-9 2-16 9-16 7 0 10 7 9 16z" fill="#eef7fb" />
        <path d="M21 13c-1-6 1-10 4-10s4 3 3 6" stroke="#eef7fb" strokeWidth="2.500" fill="none" />
        <path d="M13 19h2M20 19h2M15 22h5" stroke="#58bfe6" />
      </Svg>
    ),
  },
  {
    node: (
      <Svg w={26} h={32}>
        <ellipse cx="13" cy="10" rx="8" ry="9.500" fill="#111" />
        <ellipse cx="13" cy="21" rx="10" ry="9.500" fill="#111" />
        <ellipse cx="13" cy="22" rx="7" ry="8" fill="#fff" />
        <circle cx="10" cy="8" r="2.200" fill="#fff" />
        <circle cx="16" cy="8" r="2.200" fill="#fff" />
        <path d="M5 15c5 2 11 2 16 0l1 3-6 2-1 4-3-3-7-2z" fill="#d8201e" />
        <ellipse cx="13" cy="12" rx="3.500" ry="1.500" fill="#f5a51c" />
        <path d="M5 30h6v2H5zM15 30h6v2h-6z" fill="#f5a51c" />
      </Svg>
    ),
  },
  { node: <AppSquare text="Ps" border="#31c2ee" bg="#04202f" color="#39c6f3" /> },
  { node: <AppSquare text="Ai" border="#f58a1f" bg="#2c0f02" color="#fa9a2d" /> },
  {
    box: true,
    node: (
      <Svg w={32} h={30}>
        <path d="M1 6h12l2 3h16v20H1z" fill="#f3d36e" />
        <rect x="1" y="3" width="30" height="6" fill="#f7e7a6" />
        <rect x="11" y="2" width="4" height="3" fill="#d8352a" />
        <rect x="20" y="3" width="4" height="3" fill="#3a9a4a" />
        <path d="M7 20h18l3 3v6H4v-6z" fill="#7fc8ee" />
        <path d="M12 24h8v5h-8z" fill="#f3f9fc" />
      </Svg>
    ),
  },
  {
    box: true,
    node: (
      <Svg w={32} h={32}>
        <circle cx="15" cy="15" r="11.500" fill="none" stroke="#1d7fe0" strokeWidth="6" />
        <path d="M15 31h14c3-1 3-7-2-7-1-4-7-4-8 0-4-1-6 5-4 7z" fill="#f1f7fb" />
      </Svg>
    ),
  },
  {
    node: (
      <Svg w={30} h={30}>
        <circle cx="15" cy="15" r="15" fill="#dc4437" />
        <path d="M15 15L28 22.500A15 15 0 0 1 15 30z" fill="#f4c20d" />
        <path d="M2 7.500L9 22l6 8A15 15 0 0 1 2 7.500z" fill="#2f9e4f" />
        <path d="M15 15L8.500 26.500 2 22" fill="#2f9e4f" />
        <circle cx="15" cy="15" r="7" fill="#fff" />
        <circle cx="15" cy="15" r="5.500" fill="#4a86e8" />
      </Svg>
    ),
  },
  {
    node: (
      <Svg w={30} h={30}>
        <circle cx="15" cy="15" r="15" fill="#ef7d1a" />
        <path d="M7 12l6-3 6 1 5 5-3 1 2 6-5 3-2-7-5-1-3 2z" fill="#fbe3c8" />
      </Svg>
    ),
  },
  {
    box: true,
    node: (
      <Svg w={30} h={32}>
        <path d="M6 3h22v26H6z" fill="#eef3f6" />
        <path d="M8 5h18v20H8z" fill="#8fc8d6" />
        <path d="M10 6L2 27l22 3 2-8z" fill="#6fb5c4" />
        <path d="M6 3h22" stroke="#9a9a9a" strokeWidth="2" strokeDasharray="1 1" />
      </Svg>
    ),
  },
  {
    box: true,
    node: (
      <Svg w={32} h={32}>
        <circle cx="16" cy="16" r="16" fill="#1678d8" />
        <rect x="10" y="6" width="12" height="20" rx="1.500" fill="#f2f8fd" />
        <rect x="11.500" y="8" width="9" height="14" fill="#2a8ae4" />
      </Svg>
    ),
  },
  {
    box: true,
    node: (
      <Svg w={32} h={32}>
        <rect width="32" height="32" rx="6" fill="#1c79ec" />
        <path d="M16 5l10 3v7c0 6-4 10-10 12-6-2-10-6-10-12V8z" fill="none" stroke="#fff" strokeWidth="2.500" />
        <path d="M9 12l7 6 7-6" fill="none" stroke="#fff" strokeWidth="2.500" />
      </Svg>
    ),
  },
  {
    box: true,
    bright: true,
    node: (
      <Svg w={32} h={30}>
        <rect x="8" y="0" width="24" height="30" rx="2" fill="#21a366" />
        <rect x="20" y="0" width="12" height="15" fill="#33c481" />
        <rect x="8" y="15" width="24" height="8" fill="#107c41" />
        <rect x="8" y="23" width="24" height="7" fill="#185c37" />
        <rect x="0" y="7" width="17" height="16" rx="1" fill="#107c41" />
        <path d="M5 11l7 8M12 11l-7 8" stroke="#fff" strokeWidth="2.200" />
      </Svg>
    ),
  },
];

function Taskbar() {
  return (
    <div className="flex h-[40px] shrink-0 items-center bg-[#7f465b] pl-[15px] text-white">
      {TASK_ICONS.map((t, i) => (
        <div key={i} className="flex h-[40px] w-[62px] shrink-0 items-center justify-center">
          <div className={`flex h-[38px] w-[58px] items-center justify-center ${t.box ? "border" : ""} ${t.bright ? "border-[#d8c4cc] bg-[#a6768a]" : t.box ? "border-[#a77d8e] bg-[#916074]" : ""}`}>
            {t.node}
          </div>
        </div>
      ))}
      <div className="ml-[7px] flex items-center">
        <span className="h-0 w-0 border-x-[4px] border-b-[4px] border-x-transparent border-b-white" />
        <span className="ml-[13px]">
          <Svg w={16} h={18}>
            <ellipse cx="8" cy="6" rx="5" ry="6" fill="#111" />
            <ellipse cx="8" cy="12" rx="7" ry="6" fill="#111" />
            <ellipse cx="8" cy="13" rx="4.500" ry="4.500" fill="#fff" />
            <path d="M2 8c4 1 8 1 12 0v2l-4 1-1 3-2-3-5-1z" fill="#d8201e" />
          </Svg>
        </span>
        <span className="ml-[10px]">
          <Svg w={16} h={16}>
            <path d="M1.500 0v16" stroke="#fff" strokeWidth="1.500" />
            <path d="M2 1h7l-1 3 3 1v4H2z" fill="#fff" />
            <circle cx="11.500" cy="11.500" r="4.500" fill="#d8352a" />
            <path d="M9.500 9.500l4 4M13.500 9.500l-4 4" stroke="#fff" />
          </Svg>
        </span>
        <span className="ml-[9px]">
          <Svg w={16} h={16}>
            <rect x="7.500" y="1.500" width="8" height="14" stroke="#fff" fill="none" />
            <rect x="9" y="3" width="5" height="11" fill="#fff" />
            <path d="M1 1v5M4 1v5M0 6h5v3H0zM2.500 9v6" stroke="#fff" />
          </Svg>
        </span>
        <span className="ml-[9px]">
          <Svg w={16} h={14}>
            <path d="M0 4h3l4-4v14l-4-4H0z" fill="#fff" />
            <path d="M10 3c2 2 2 6 0 8M12.500 1c3 3 3 9 0 12" stroke="#fff" fill="none" />
          </Svg>
        </span>
        <span className="ml-[9px]">
          <Svg w={15} h={13}>
            <path d="M0 11h2v2H0zM3 9h2v4H3zM6 7h2v6H6zM9 4h2v9H9zM12 0h2v13h-2z" fill="#fff" />
          </Svg>
        </span>
        <span className="ml-[14px] text-[14px]">中</span>
        <span className="ml-[11px]">
          <div className="flex h-[16px] w-[16px] items-center justify-center rounded-[3px] bg-[#e8502a] font-['Liberation_Sans',sans-serif] text-[14px] font-bold italic leading-none">S</div>
        </span>
        <div className="ml-[11px] w-[70px] text-center text-[12px] leading-[16px]">
          <div>12:04</div>
          <div className="whitespace-nowrap">2020/10/21</div>
        </div>
      </div>
    </div>
  );
}

/* ---------- overlays ---------- */

function Tooltip() {
  return (
    <div className="absolute left-[8px] top-[158px] w-[143px] border border-[#d8d8d8] bg-white pt-[7px] text-[12px] leading-[15px] text-[#6a6a6a] shadow-[1px_1px_2px_rgba(0,0,0,0.25)]">
      <div className="pl-[11px] text-[#555]">数据透视表</div>
      <div className="mt-[10px] whitespace-nowrap pl-[11px]">
        <div>使用数据透视表轻松地</div>
        <div>排列和汇总复杂数据。</div>
        <div className="h-[15px]" />
        <div>仅供参考: 您可以双击</div>
        <div>某个值以查看哪些详细</div>
        <div>值构成了汇总的总计</div>
        <div>值。</div>
      </div>
      <div className="mx-[4px] mt-[5px] border-t border-[#dcdcdc]" />
      <div className="flex h-[30px] items-center pl-[10px]">
        <span className="flex h-[16px] w-[16px] items-center justify-center rounded-full bg-[#3f73a8] text-[12px] font-bold leading-none text-white">?</span>
        <span className="ml-[8px] font-bold text-[#3f73a8]">了解详细信息</span>
      </div>
    </div>
  );
}

function Arrows() {
  return (
    <svg width="1366" height="768" viewBox="0 0 1366 768" className="pointer-events-none absolute left-0 top-0 drop-shadow-[2px_2px_2px_rgba(0,0,0,0.4)]">
      <polygon points="47,133 80,146 72,152 212,265 208,269 64,160 58,168" fill="#e5151c" />
      <polygon points="331,372 321,327 337,332 386,195 391,197 344,334 351,338" fill="#e5151c" />
    </svg>
  );
}

function Watermark() {
  return (
    <div className="pointer-events-none absolute left-[1020px] top-[615px] h-[130px] w-[300px]">
      <div className="absolute left-[57px] top-[31px] whitespace-nowrap text-[17px] tracking-[3px] text-[#a8a8a8]">激活 Windows</div>
      <div className="absolute left-[60px] top-[58px] whitespace-nowrap text-[12px] text-[#8a8a8a]">转到"设置"以激活 Windows。</div>
      <div className="absolute left-[22px] top-[39px] flex h-[24px] w-[24px] items-center justify-center border border-[#217346] bg-white/60 text-[11px] text-[#c89a3a]">/</div>
      <svg width="24" height="70" viewBox="0 0 24 70" className="absolute left-[3px] top-[30px] opacity-50" fill="none" stroke="#999" strokeWidth="3">
        <circle cx="12" cy="14" r="8" />
        <path d="M12 22v36" />
      </svg>
      <svg width="110" height="60" viewBox="0 0 110 60" className="absolute left-[95px] top-0 opacity-85" fill="#fff" stroke="#cfcfcf">
        <ellipse cx="34" cy="24" rx="9" ry="12" />
        <ellipse cx="56" cy="14" rx="9" ry="12" />
        <ellipse cx="78" cy="24" rx="9" ry="12" />
        <path d="M40 52c-6-14 10-20 16-20s22 6 16 20c-4 4-28 4-32 0z" />
      </svg>
      <div className="absolute left-[28px] top-[48px] whitespace-nowrap font-['Liberation_Sans',sans-serif] text-[56px] font-bold leading-[52px] text-white/65 [text-shadow:0_0_1px_#999]">Baidu</div>
      <div className="absolute left-[188px] top-[52px] whitespace-nowrap text-[40px] font-bold leading-[44px] text-white/65 [text-shadow:0_0_1px_#999]">经验</div>
      <div className="absolute left-[32px] top-[95px] whitespace-nowrap font-['Liberation_Sans',sans-serif] text-[29px] leading-[32px] text-white/70">jingyan.baidu.com</div>
    </div>
  );
}

function SideWidget() {
  return (
    <div className="absolute left-[1356px] top-[341px] flex h-[59px] w-[10px] flex-col justify-center gap-px rounded-l-[2px] bg-[#3f4a5c] pl-[4px] pr-[1px]">
      {Array.from({ length: 15 }).map((_, i) => (
        <span key={i} className={`h-[2px] ${i < 8 ? "bg-[#7c8797]" : i < 11 ? "bg-[#b6d48a]" : "bg-[#5fd0c6]"}`} />
      ))}
    </div>
  );
}

export default function App() {
  return (
    <div className="relative flex h-[768px] w-[1366px] flex-col overflow-hidden bg-[#e6e6e6] font-['Noto_Sans','Noto_Sans_CJK_SC',sans-serif]">
      <TitleBar />
      <TabStrip />
      <Ribbon />
      <FormulaBar />
      <Sheet />
      <SheetTabs />
      <StatusBar />
      <Taskbar />
      <Tooltip />
      <SideWidget />
      <Watermark />
      <Arrows />
    </div>
  );
}
